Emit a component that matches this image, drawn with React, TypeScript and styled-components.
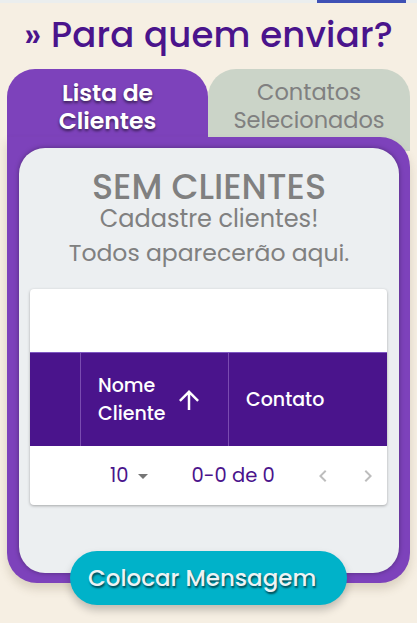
import React from "react";
import styled, { createGlobalStyle } from "styled-components";

const GlobalStyle = createGlobalStyle`
  html, body {
    margin: 0;
    padding: 0;
    background: #f6efe3;
  }
  body {
    font-family: "Poppins", "Inter", "Noto Sans", sans-serif;
  }
`;

const Page = styled.div`
  width: 417px;
  min-height: 623px;
  background: #f6efe3;
  overflow: hidden;
`;

const TopStrip = styled.div`
  height: 3px;
  background: #ebeeee;
  display: flex;
  justify-content: flex-end;
  padding-right: 11px;
`;

const TopIndicator = styled.div`
  width: 89px;
  background: #3f51b5;
`;

const Title = styled.h1`
  margin: 12px 0 14px;
  text-align: center;
  font-size: 35.5px;
  line-height: 40px;
  font-weight: 500;
  color: #4a148c;
  letter-spacing: 0.2px;
`;

const Board = styled.div`
  margin: 0 7px;
`;

const TabsRow = styled.div`
  display: flex;
  align-items: flex-start;
`;

const Tab = styled.div<{ $active?: boolean }>`
  box-sizing: border-box;
  width: ${(p) => (p.$active ? "201px" : "auto")};
  flex: ${(p) => (p.$active ? "none" : "1")};
  height: ${(p) => (p.$active ? "68px" : "82px")};
  padding-top: 10px;
  border-radius: 28px 28px 0 0;
  background: ${(p) => (p.$active ? "#7d42bb" : "#cbd4c8")};
  color: ${(p) => (p.$active ? "#ffffff" : "#808080")};
  text-align: center;
  font-size: ${(p) => (p.$active ? "23.5px" : "22.5px")};
  line-height: 27.5px;
  font-weight: ${(p) => (p.$active ? 600 : 400)};
  text-shadow: ${(p) => (p.$active ? "0 2px 3px rgba(0,0,0,0.55)" : "none")};
`;

const Panel = styled.div`
  position: relative;
  z-index: 1;
  margin-top: -14px;
  background: #7d42bb;
  border-radius: 0 30px 30px 30px;
  padding: 11px 11px 10px 12px;
  box-shadow: 0 6px 10px rgba(90, 70, 40, 0.18);
`;

const Card = styled.div`
  height: 425px;
  box-sizing: border-box;
  background: #eceff1;
  border-radius: 26px;
  box-shadow: 0 0 5px rgba(0, 0, 0, 0.35);
  padding-top: 21px;
  color: #808080;
  text-align: center;
`;

const EmptyTitle = styled.div`
  font-size: 35px;
  line-height: 36px;
  font-weight: 500;
`;

const EmptyLine = styled.div<{ $gap?: number; $size: number }>`
  font-size: ${(p) => p.$size}px;
  line-height: 28px;
  margin-top: ${(p) => p.$gap ?? 0}px;
`;

const TableCard = styled.div`
  margin: 22px 12px 0 11px;
  background: #ffffff;
  border-radius: 4px;
  box-shadow: 0 1px 3px rgba(0, 0, 0, 0.3);
  overflow: hidden;
  text-align: left;
`;

const Toolbar = styled.div`
  height: 63px;
`;

const HeadRow = styled.div`
  display: grid;
  grid-template-columns: 50px 148px 1fr;
  height: 94px;
  background: #4a148c;
  border-top: 1px solid #7e57c2;
  box-sizing: border-box;
  color: #ffffff;
  font-size: 19px;
  font-weight: 500;
`;

const HeadCell = styled.div<{ $divider?: boolean }>`
  display: flex;
  align-items: center;
  gap: 8px;
  padding-left: ${(p) => (p.$divider ? "17px" : "0")};
  border-left: ${(p) => (p.$divider ? "1px solid #7a4bb0" : "none")};
`;

const HeadLabel = styled.div`
  line-height: 28px;
`;

const Footer = styled.div`
  height: 59px;
  display: flex;
  align-items: center;
  color: #4a148c;
  font-size: 19.5px;
`;

const PerPage = styled.div`
  display: flex;
  align-items: center;
  margin-left: 80px;
  gap: 2px;
`;

const Range = styled.div`
  margin-left: 37px;
`;

const Pager = styled.div`
  display: flex;
  margin-left: auto;
  margin-right: 7px;
  gap: 21px;
`;

const ActionButton = styled.button`
  position: relative;
  z-index: 2;
  display: block;
  margin: -32px 0 0 63px;
  width: 277px;
  height: 54px;
  border: none;
  border-radius: 27px;
  background: #00b2c9;
  color: #eef3f4;
  font-family: inherit;
  font-size: 23px;
  font-weight: 500;
  text-align: left;
  padding-left: 18px;
  text-shadow: 1px 2px 2px rgba(0, 0, 0, 0.6);
  box-shadow: 0 5px 8px rgba(0, 0, 0, 0.22);
`;

const ArrowUp = () => (
  <svg width="30" height="30" viewBox="0 0 24 24" fill="#ffffff">
    <path d="M4 12l1.41 1.41L11 7.83V20h2V7.83l5.58 5.59L20 12l-8-8-8 8z" />
  </svg>
);

const DropDown = () => (
  <svg width="24" height="24" viewBox="0 0 24 24" fill="#757575">
    <path d="M7 10l5 5 5-5z" />
  </svg>
);

const Chevron = ({ dir }: { dir: "left" | "right" }) => (
  <svg width="24" height="24" viewBox="0 0 24 24" fill="rgba(0,0,0,0.26)">
    <path
      d={
        dir === "left"
          ? "M15.41 16.59L10.83 12l4.58-4.59L14 6l-6 6 6 6 1.41-1.41z"
          : "M8.59 16.59L13.17 12 8.59 7.41 10 6l6 6-6 6-1.41-1.41z"
      }
    />
  </svg>
);

const App: React.FC = () => {
  return (
    <Page>
      <GlobalStyle />
      <TopStrip>
        <TopIndicator />
      </TopStrip>
      <Title>» Para quem enviar?</Title>
      <Board>
        <TabsRow>
          <Tab $active>
            Lista de
            <br />
            Clientes
          </Tab>
          <Tab>
            Contatos
            <br />
            Selecionados
          </Tab>
        </TabsRow>
        <Panel>
          <Card>
            <EmptyTitle>SEM CLIENTES</EmptyTitle>
            <EmptyLine $size={24}>Cadastre clientes!</EmptyLine>
            <EmptyLine $size={23.5} $gap={6}>
              Todos aparecerão aqui.
            </EmptyLine>
            <TableCard>
              <Toolbar />
              <HeadRow>
                <HeadCell />
                <HeadCell $divider>
                  <HeadLabel>
                    Nome
                    <br />
                    Cliente
                  </HeadLabel>
                  <ArrowUp />
                </HeadCell>
                <HeadCell $divider>Contato</HeadCell>
              </HeadRow>
              <Footer>
                <PerPage>
                  10
                  <DropDown />
                </PerPage>
                <Range>0-0 de 0</Range>
                <Pager>
                  <Chevron dir="left" />
                  <Chevron dir="right" />
                </Pager>
              </Footer>
            </TableCard>
          </Card>
        </Panel>
        <ActionButton>Colocar Mensagem</ActionButton>
      </Board>
    </Page>
  );
};

export default App;
